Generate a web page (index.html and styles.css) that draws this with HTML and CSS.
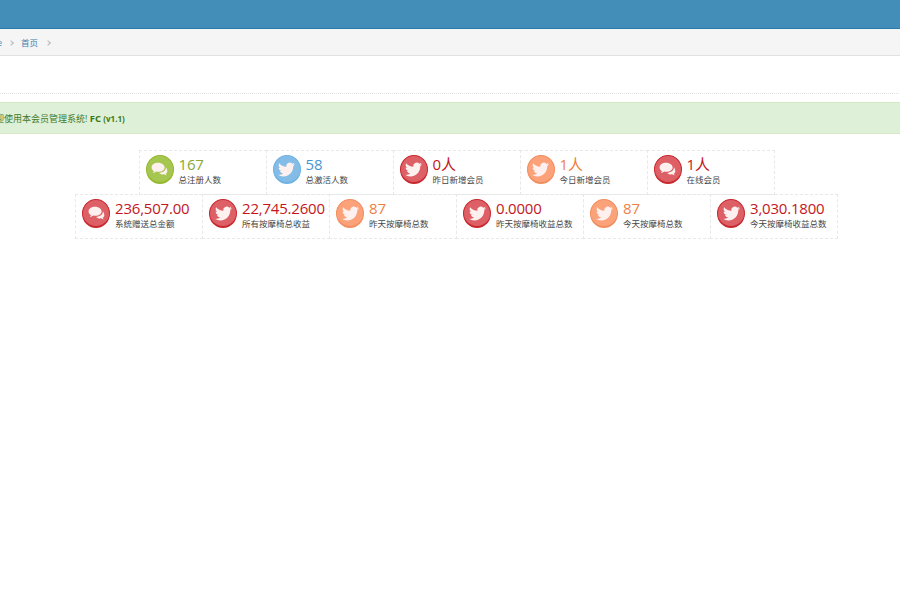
FILE: index.html
```html
<!DOCTYPE html>
<html lang="zh">
<head>
<meta charset="utf-8">
<title>会员管理系统</title>
<link rel="stylesheet" href="styles.css">
</head>
<body>
<svg class="defs" width="0" height="0" aria-hidden="true">
  <symbol id="bird" viewBox="0 0 24 24"><path d="M23.953 4.57a10 10 0 01-2.825.775 4.958 4.958 0 002.163-2.723c-.951.555-2.005.959-3.127 1.184a4.92 4.92 0 00-8.384 4.482C7.69 8.095 4.067 6.13 1.64 3.162a4.822 4.822 0 00-.666 2.475c0 1.71.87 3.213 2.188 4.096a4.904 4.904 0 01-2.228-.616v.06a4.923 4.923 0 003.946 4.827 4.996 4.996 0 01-2.212.085 4.936 4.936 0 004.604 3.417 9.867 9.867 0 01-6.102 2.105c-.39 0-.779-.023-1.17-.067a13.995 13.995 0 007.557 2.209c9.053 0 13.998-7.496 13.998-13.985 0-.21 0-.42-.015-.63A9.935 9.935 0 0024 4.59z"/></symbol>
  <symbol id="chat" viewBox="0 0 24 24"><path d="M10 2.500C4.800 2.500.8 5.400.8 9c0 2.100 1.300 3.900 3.400 5.100-.2 1.100-.8 2.100-1.700 2.900 1.900-.2 3.500-1 4.800-2.100.9.200 1.700.3 2.700.3 5.100 0 9.200-2.800 9.200-6.200S15.100 2.500 10 2.500z"/><path d="M20.900 8.700c.1.300.1.700.1 1 0 3.900-4.100 6.900-9.600 7.100 1.300 1.300 3.300 2.100 5.500 2.100.6 0 1.200-.1 1.700-.2 1 .8 2.200 1.300 3.500 1.400-.6-.6-1-1.300-1.200-2.100 1.300-.9 2.100-2.200 2.100-3.600 0-2.300-.8-4.400-2.100-5.700z"/></symbol>
</svg>
<header class="topbar"></header>
<main class="main">
  <nav class="crumbs">
    <span class="crumb-home"><span>Home</span></span><span class="chev"></span><a class="crumb-link">首页</a><span class="chev"></span>
  </nav>
  <div class="title-band"></div>
  <div class="alert"><span>欢迎使用本会员管理系统! <b>FC</b> <b class="ver">(v1.1)</b></span></div>
  <section class="stats">
    <div class="row">
      <div class="cell green"><span class="ico"><svg><use href="#chat"/></svg></span><div class="txt"><div class="num">167</div><div class="lbl">总注册人数</div></div></div>
      <div class="cell blue"><span class="ico"><svg><use href="#bird"/></svg></span><div class="txt"><div class="num">58</div><div class="lbl">总激活人数</div></div></div>
      <div class="cell red"><span class="ico"><svg><use href="#bird"/></svg></span><div class="txt"><div class="num">0人</div><div class="lbl">昨日新增会员</div></div></div>
      <div class="cell orange"><span class="ico"><svg><use href="#bird"/></svg></span><div class="txt"><div class="num">1人</div><div class="lbl">今日新增会员</div></div></div>
      <div class="cell red"><span class="ico"><svg><use href="#chat"/></svg></span><div class="txt"><div class="num">1人</div><div class="lbl">在线会员</div></div></div>
    </div>
    <div class="row">
      <div class="cell red"><span class="ico"><svg><use href="#chat"/></svg></span><div class="txt"><div class="num">236,507.00</div><div class="lbl">系统赠送总金额</div></div></div>
      <div class="cell red"><span class="ico"><svg><use href="#bird"/></svg></span><div class="txt"><div class="num">22,745.2600</div><div class="lbl">所有按摩椅总收益</div></div></div>
      <div class="cell orange"><span class="ico"><svg><use href="#bird"/></svg></span><div class="txt"><div class="num">87</div><div class="lbl">昨天按摩椅总数</div></div></div>
      <div class="cell red"><span class="ico"><svg><use href="#bird"/></svg></span><div class="txt"><div class="num">0.0000</div><div class="lbl">昨天按摩椅收益总数</div></div></div>
      <div class="cell orange"><span class="ico"><svg><use href="#bird"/></svg></span><div class="txt"><div class="num">87</div><div class="lbl">今天按摩椅总数</div></div></div>
      <div class="cell red"><span class="ico"><svg><use href="#bird"/></svg></span><div class="txt"><div class="num">3,030.1800</div><div class="lbl">今天按摩椅收益总数</div></div></div>
    </div>
  </section>
</main>
</body>
</html>
```
FILE: styles.css
```css
* { box-sizing: border-box; }
html, body { margin: 0; height: 100%; overflow: hidden; background: #fff; }
body { font-family: "Open Sans", "Noto Sans CJK SC", sans-serif; color: #333; }
.defs { position: absolute; }
.topbar { height: 29px; background: #438eb9; border-bottom: 1px solid #2a7aab; }
.main { margin-left: -20px; width: 953px; }
.crumbs { height: 27px; background: #f5f5f5; border-bottom: 1px solid #e0e0e0; display: flex; align-items: center; font-size: 8.5px; color: #393939; }
.crumb-home { width: 22px; display: flex; justify-content: flex-end; color: #4c8fbd; white-space: nowrap; }
.crumb-link { color: #3f7fae; margin-right: 1px; }
.chev { width: 4px; height: 4px; margin: 1px 8px 0 7px; border-top: 1px solid #b8b8b8; border-right: 1px solid #b8b8b8; transform: rotate(45deg); }
.title-band { height: 38px; border-bottom: 1px dotted #e2e2e2; }
.alert { margin-top: 8px; height: 32px; display: flex; align-items: center; padding-left: 6px; background: #dff0d8; border-top: 1px solid #d6e9c6; border-bottom: 1px solid #d6e9c6; color: #3f7a2a; font-size: 9px; white-space: nowrap; }
.alert b { color: #3a7a10; font-size: 9.5px; }
.alert .ver { font-size: 8px; }
.stats { margin-top: 16px; display: flex; flex-direction: column; align-items: center; }
.row { display: flex; margin-top: -1px; }
.row:first-child { margin-top: 0; }
.cell { width: 128px; height: 45px; margin-left: -1px; padding: 4px 0 0 6px; display: flex; border: 1px dashed #e8e8e8; flex: none; }
.row .cell:first-child { margin-left: 0; }
.ico { width: 28px; height: 29px; margin-right: 5px; border-radius: 50%; display: flex; align-items: center; justify-content: center; border: 1px solid; border-bottom-width: 2px; flex: none; }
.ico svg { width: 17px; height: 17px; fill: #fdf0ee; }
.txt { display: flex; flex-direction: column; margin-top: -1px; }
.num { font-size: 15px; letter-spacing: -0.2px; line-height: 20px; white-space: nowrap; }
.lbl { font-size: 8.5px; line-height: 12px; color: #444; white-space: nowrap; }
.green .ico { background: #a5c750; border-color: #95b82f; }
.green .num { color: #8aa834; }
.blue .ico { background: #84bce8; border-color: #6fb3e0; }
.blue .num { color: #4a95d2; }
.red .ico { background: #de6067; border-color: #c8292f; }
.red .num { color: #c4161c; }
.orange .ico { background: #fba27a; border-color: #f28f60; }
.orange .num { color: #ee7f45; }
```
